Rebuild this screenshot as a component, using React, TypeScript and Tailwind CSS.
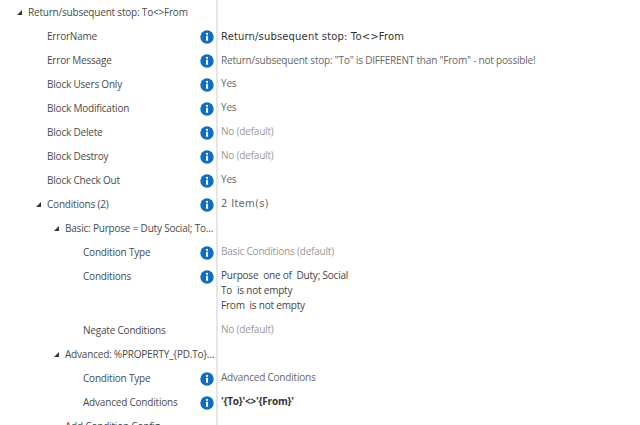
import React from "react";

const font = "font-['Open_Sans','Noto_Sans',sans-serif]";

function Info() {
  return (
    <svg width="14" height="14" viewBox="0 0 14 14" className="shrink-0">
      <circle cx="7" cy="7" r="6.7" fill="#106ebe" />
      <circle cx="7" cy="3.9" r="1.1" fill="#fff" />
      <rect x="6" y="5.8" width="2" height="5" fill="#fff" />
    </svg>
  );
}

function Tri() {
  return (
    <svg width="5" height="5" viewBox="0 0 5 5" className="shrink-0 mr-[6px]">
      <polygon points="5,0 5,5 0,5" fill="#333" />
    </svg>
  );
}

type RowProps = {
  pad: string;
  label: string;
  expander?: boolean;
  info?: boolean;
  tall?: boolean;
  children?: React.ReactNode;
};

function Row({ pad, label, expander, info, tall, children }: RowProps) {
  return (
    <div className={`flex ${tall ? "h-[54px]" : "h-6"}`}>
      <div className="flex w-[218px] shrink-0 border-r-2 border-[#e6e6e6] pr-[2px]">
        <div className={`flex h-6 min-w-0 flex-1 items-center whitespace-nowrap text-[#4a4a4a] ${pad}`}>
          {expander && <Tri />}
          <span>{label}</span>
        </div>
        <div className="mt-px flex h-6 w-[14px] items-center">{info && <Info />}</div>
      </div>
      <div className="pl-[3px] pt-[4px] leading-[15px]">{children}</div>
    </div>
  );
}

const Plain = ({ children }: { children: React.ReactNode }) => (
  <div className="text-[#666666]">{children}</div>
);
const Def = ({ children }: { children: React.ReactNode }) => (
  <div className="text-[#999999]">{children}</div>
);

export default function App() {
  return (
    <div className={`h-[425px] w-[640px] overflow-hidden bg-white text-[10px] tracking-[-0.2px] ${font}`}>
      <Row pad="pl-[17px]" label="Return/subsequent stop: To<>From" expander />
      <Row pad="pl-[47px]" label="ErrorName" info>
        <div className="mt-px font-['DejaVu_Sans',sans-serif] text-[10px] font-medium tracking-[0.15px] text-[#333333]">
          Return/subsequent stop: To&lt;&gt;From
        </div>
      </Row>
      <Row pad="pl-[47px]" label="Error Message" info>
        <div className="mt-px text-[#666666]">Return/subsequent stop: "To" is DIFFERENT than "From" - not possible!</div>
      </Row>
      <Row pad="pl-[47px]" label="Block Users Only" info>
        <Plain>Yes</Plain>
      </Row>
      <Row pad="pl-[47px]" label="Block Modification" info>
        <Plain>Yes</Plain>
      </Row>
      <Row pad="pl-[47px]" label="Block Delete" info>
        <Def>No (default)</Def>
      </Row>
      <Row pad="pl-[47px]" label="Block Destroy" info>
        <Def>No (default)</Def>
      </Row>
      <Row pad="pl-[47px]" label="Block Check Out" info>
        <Plain>Yes</Plain>
      </Row>
      <Row pad="pl-[36px]" label="Conditions (2)" expander info>
        <div className="font-['DejaVu_Sans',sans-serif] text-[10px] tracking-[0.3px] text-[#666666]">2 Item(s)</div>
      </Row>
      <Row pad="pl-[54px]" label="Basic: Purpose = Duty Social; To..." expander />
      <Row pad="pl-[83px]" label="Condition Type" info>
        <Def>Basic Conditions (default)</Def>
      </Row>
      <Row pad="pl-[83px]" label="Conditions" info tall>
        <div className="text-[#444444]">Purpose&nbsp; one of&nbsp; Duty; Social</div>
        <div className="text-[#444444]">To&nbsp; is not empty</div>
        <div className="text-[#444444]">From&nbsp; is not empty</div>
      </Row>
      <Row pad="pl-[83px]" label="Negate Conditions">
        <Def>No (default)</Def>
      </Row>
      <Row pad="pl-[54px]" label="Advanced: %PROPERTY_{PD.To}..." expander />
      <Row pad="pl-[83px]" label="Condition Type" info>
        <Plain>Advanced Conditions</Plain>
      </Row>
      <Row pad="pl-[83px]" label="Advanced Conditions" info>
        <div className="font-bold text-[#333333]">'{"{To}"}'&lt;&gt;'{"{From}"}'</div>
      </Row>
      <Row pad="pl-[65px]" label="Add Condition Config" />
    </div>
  );
}
